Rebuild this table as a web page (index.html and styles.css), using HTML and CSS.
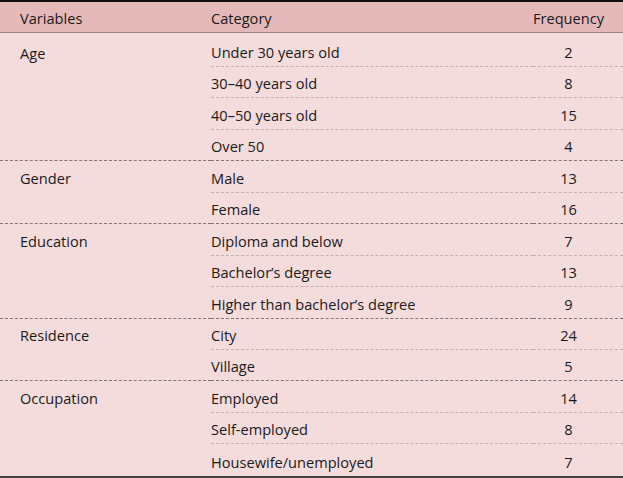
FILE: index.html
```html
<!DOCTYPE html>
<html>
<head>
<meta charset="utf-8">
<link rel="stylesheet" href="styles.css">
</head>
<body>
<table class="tbl">
  <thead>
    <tr><th class="c1">Variables</th><th class="c2">Category</th><th class="c3">Frequency</th></tr>
  </thead>
  <tbody>
    <tr class="first"><td class="c1">Age</td><td class="c2 in">Under 30 years old</td><td class="c3 in">2</td></tr>
    <tr><td class="c1"></td><td class="c2 in">30–40 years old</td><td class="c3 in">8</td></tr>
    <tr><td class="c1"></td><td class="c2 in">40–50 years old</td><td class="c3 in">15</td></tr>
    <tr class="grp"><td class="c1"></td><td class="c2">Over 50</td><td class="c3">4</td></tr>
    <tr><td class="c1">Gender</td><td class="c2 in">Male</td><td class="c3 in">13</td></tr>
    <tr class="grp"><td class="c1"></td><td class="c2">Female</td><td class="c3">16</td></tr>
    <tr><td class="c1">Education</td><td class="c2 in">Diploma and below</td><td class="c3 in">7</td></tr>
    <tr><td class="c1"></td><td class="c2 in">Bachelor’s degree</td><td class="c3 in">13</td></tr>
    <tr class="grp"><td class="c1"></td><td class="c2">Higher than bachelor’s degree</td><td class="c3">9</td></tr>
    <tr><td class="c1">Residence</td><td class="c2 in">City</td><td class="c3 in">24</td></tr>
    <tr class="grp"><td class="c1"></td><td class="c2">Village</td><td class="c3">5</td></tr>
    <tr><td class="c1">Occupation</td><td class="c2 in">Employed</td><td class="c3 in">14</td></tr>
    <tr><td class="c1"></td><td class="c2 in">Self-employed</td><td class="c3 in">8</td></tr>
    <tr class="last"><td class="c1"></td><td class="c2">Housewife/unemployed</td><td class="c3">7</td></tr>
  </tbody>
</table>
</body>
</html>
```
FILE: styles.css
```css
html, body { margin: 0; padding: 0; background: #ffffff; }
.tbl {
  width: 623px;
  border-collapse: collapse;
  font-family: "Open Sans", "Liberation Sans", sans-serif;
  font-size: 14.6px;
  color: #1a1a1a;
  background: #f4dcdc;
  border-top: 2px solid #111;
  border-bottom: 2px solid #444;
}
.tbl th {
  background: #e5b9b9;
  font-weight: normal;
  height: 28px;
  padding: 2px 0 0 0;
  text-align: left;
  border-bottom: 1px solid #9c8585;
}
.tbl td { height: 26.45px; padding: 4px 0 0 0; line-height: 1.2; }
.c1 { width: 191px; padding-left: 20px !important; }
.c3 { width: 70px; text-align: center !important; padding-right: 19px !important; }
.tbl th.c3 { text-align: right !important; }
.tbl td.in { border-bottom: 1px dashed #c4b0b0; }
.tbl tr.grp td { border-bottom: 1px dashed #857373; }
.tbl tr.first td { padding-top: 7px; height: 26px; }
.tbl tr.last td { padding-top: 5px; }
```
